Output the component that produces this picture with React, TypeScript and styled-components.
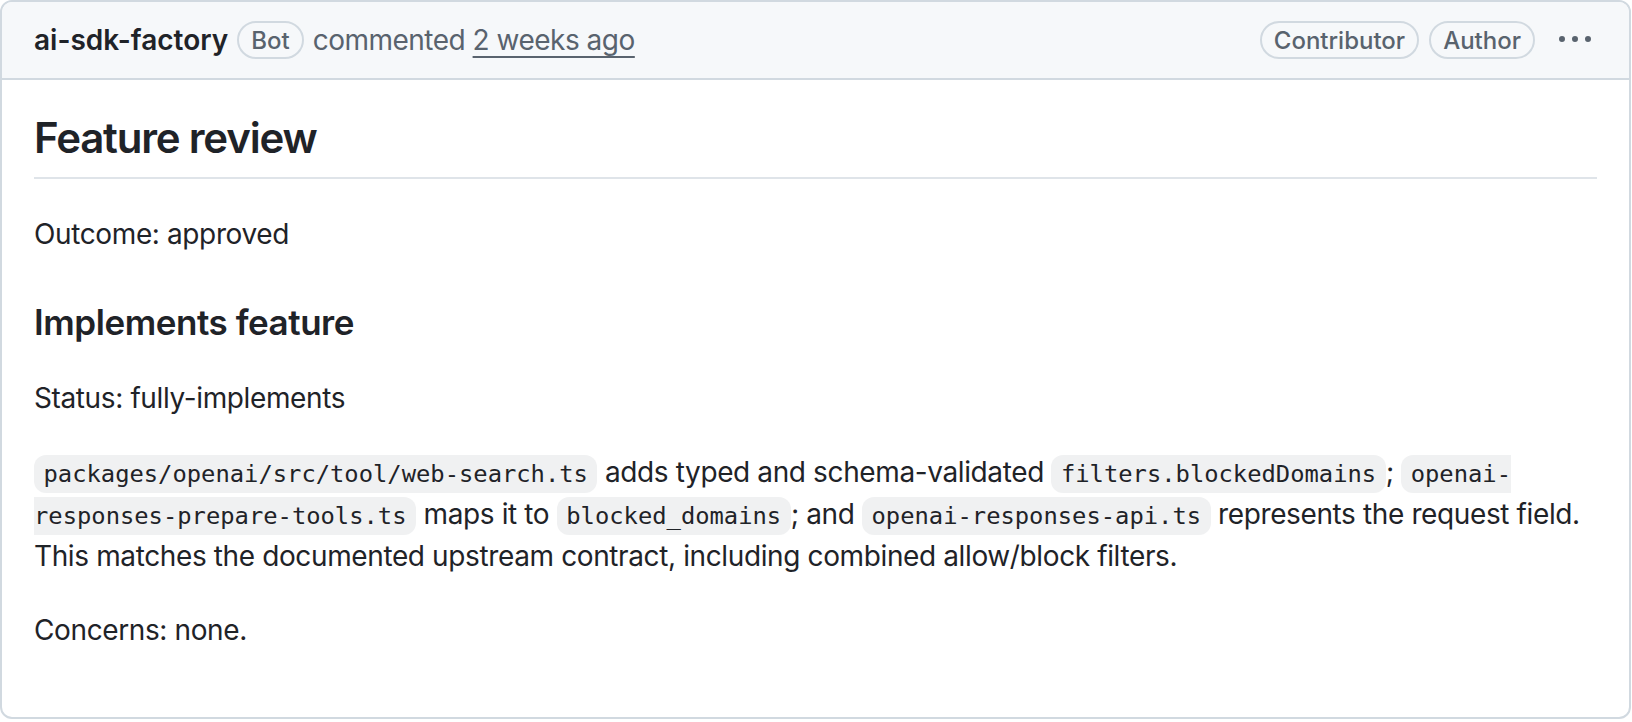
import React from "react";
import styled, { createGlobalStyle } from "styled-components";

const GlobalStyle = createGlobalStyle`
  html, body { margin: 0; padding: 0; background: #ffffff; }
  body {
    font-family: Inter, "Liberation Sans", sans-serif;
    color: #1f2328;
    -webkit-font-smoothing: antialiased;
  }
`;

const Card = styled.div`
  box-sizing: border-box;
  width: 1631px;
  border: 2px solid #d1d9e0;
  border-radius: 12px;
  background: #ffffff;
  overflow: hidden;
`;

const Header = styled.div`
  box-sizing: border-box;
  height: 78px;
  display: flex;
  align-items: center;
  padding: 0 38px 0 32px;
  background: #f6f8fa;
  border-bottom: 2px solid #d1d9e0;
  font-size: 28px;
`;

const Meta = styled.div`
  flex: 1;
  display: flex;
  align-items: center;
  gap: 9px;
  min-width: 0;
`;

const Author = styled.span`
  font-weight: 600;
  color: #1f2328;
`;

const Label = styled.span`
  box-sizing: border-box;
  display: inline-flex;
  align-items: center;
  height: 38px;
  padding: 0 12px;
  border: 2px solid #d1d9e0;
  border-radius: 999px;
  font-size: 24px;
  font-weight: 500;
  color: #59636e;
  white-space: nowrap;
`;

const Action = styled.span`
  color: #59636e;
  letter-spacing: -0.5px;
`;

const TimeLink = styled.a`
  color: #59636e;
  text-decoration: underline;
  text-decoration-thickness: 2px;
  text-underline-offset: 6px;
`;

const Actions = styled.div`
  display: flex;
  align-items: center;
  gap: 10px;
`;

const Kebab = styled.button`
  display: flex;
  align-items: center;
  background: none;
  border: 0;
  padding: 0;
  margin-left: 14px;
  color: #59636e;
`;

const Body = styled.div`
  padding: 32px 32px 34px;
  font-size: 28px;
  line-height: 1.5;
  letter-spacing: -0.38px;
`;

const H2 = styled.h2`
  margin: 0 0 34px;
  padding-bottom: 12.6px;
  border-bottom: 2px solid #d1d9e0b3;
  font-size: 42px;
  line-height: 1.25;
  font-weight: 600;
  letter-spacing: -1.2px;
`;

const H3 = styled.h3`
  margin: 46px 0 32px;
  font-size: 35px;
  line-height: 1.25;
  font-weight: 600;
  letter-spacing: -0.45px;
`;

const P = styled.p`
  margin: 0 0 32px;
`;

const Code = styled.code`
  padding: 4.8px 9.5px;
  margin: 0;
  font-family: "DejaVu Sans Mono", "Liberation Mono", monospace;
  font-size: 85%;
  letter-spacing: 0;
  background: #818b981f;
  border-radius: 12px;
  white-space: break-spaces;
`;

const KebabIcon = () => (
  <svg width="32" height="32" viewBox="0 0 16 16" fill="currentColor">
    <path d="M8 9a1.5 1.5 0 1 0 0-3 1.5 1.5 0 0 0 0 3ZM1.5 9a1.5 1.5 0 1 0 0-3 1.5 1.5 0 0 0 0 3Zm13 0a1.5 1.5 0 1 0 0-3 1.5 1.5 0 0 0 0 3Z" />
  </svg>
);

export default function App() {
  return (
    <>
      <GlobalStyle />
      <Card>
        <Header>
          <Meta>
            <Author>ai-sdk-factory</Author>
            <Label>Bot</Label>
            <Action>
              commented <TimeLink href="#">2 weeks ago</TimeLink>
            </Action>
          </Meta>
          <Actions>
            <Label>Contributor</Label>
            <Label>Author</Label>
            <Kebab aria-label="Show options">
              <KebabIcon />
            </Kebab>
          </Actions>
        </Header>
        <Body>
          <H2>Feature review</H2>
          <P>Outcome: approved</P>
          <H3>Implements feature</H3>
          <P>Status: fully-implements</P>
          <P>
            <Code>packages/openai/src/tool/web-search.ts</Code> adds typed and
            schema-validated <Code>filters.blockedDomains</Code>;{" "}
            <Code>openai-responses-prepare-tools.ts</Code> maps it to{" "}
            <Code>blocked_domains</Code>; and{" "}
            <Code>openai-responses-api.ts</Code> represents the request field.
            This matches the documented upstream contract, including combined
            allow/block filters.
          </P>
          <P>Concerns: none.</P>
        </Body>
      </Card>
    </>
  );
}
